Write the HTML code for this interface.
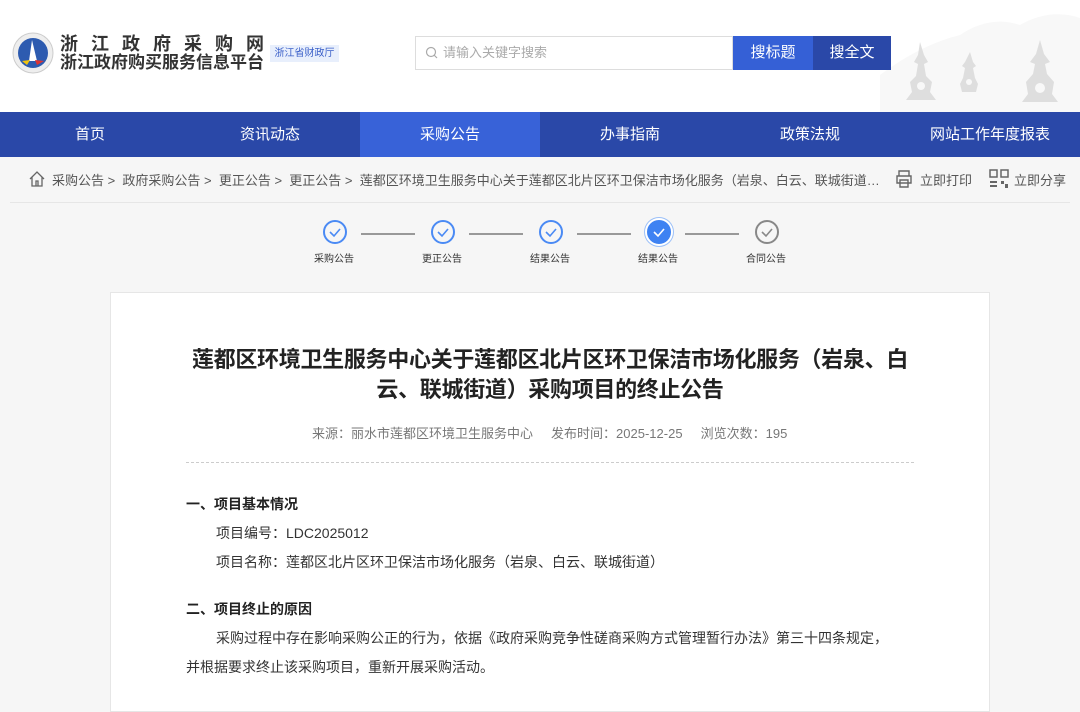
<!DOCTYPE html>
<html><head><meta charset="utf-8"><style>
*{margin:0;padding:0;box-sizing:border-box}
body{width:1080px;height:690px;overflow:hidden;background:#f6f6f6;font-family:"Liberation Sans","Noto Sans CJK SC",sans-serif;color:#333;position:relative}
.hdr{position:absolute;left:0;top:0;width:1080px;height:112px;background:#fff}
.abs{position:absolute}
.nav{position:absolute;top:112px;left:0;width:1080px;height:45px;background:#2a48a8;display:flex}
.nav div{width:180px;text-align:center;line-height:45px;color:#fff;font-size:15px}
.nav .on{background:#3862d8}
.bc{position:absolute;top:170px;left:28px;font-size:13px;color:#555;white-space:nowrap}
.step{position:absolute;top:220px;width:24px;height:24px;border:2px solid #4a8af4;border-radius:50%}
.lbl{position:absolute;top:250px;font-size:10px;color:#333;width:60px;text-align:center}
.ln{position:absolute;top:233px;height:2px;width:54px;background:#999}
.card{position:absolute;left:110px;top:292px;width:880px;height:420px;background:#fff;border:1px solid #e6e6e6}
.t{position:absolute;font-size:14px;color:#333;white-space:nowrap}
</style></head><body>
<div class="hdr">
 <svg class="abs" style="left:880px;top:0" width="200" height="112"><path d="M0 75 Q40 45 80 35 Q110 15 140 25 Q170 8 200 18 L200 112 L0 112Z" fill="#f8f8f8"/><g fill="#dedede"><path d="M40 42 L44 55 L48 62 L44 64 L46 76 L52 82 L50 92 L56 100 L26 100 L32 92 L30 82 L36 76 L38 64 L34 62 L38 55Z"/><path d="M90 52 L93 62 L96 66 L93 68 L95 78 L98 84 L96 92 L82 92 L80 84 L83 78 L85 68 L82 66 L85 62Z"/><path d="M160 40 L164 54 L170 62 L165 64 L167 74 L174 82 L172 94 L178 102 L142 102 L148 94 L146 82 L153 74 L155 64 L150 62 L156 54Z"/></g><g fill="#f8f8f8"><circle cx="41" cy="86" r="4"/><circle cx="89" cy="82" r="3"/><circle cx="160" cy="88" r="5"/></g></svg>
 <svg class="abs" style="left:12px;top:31px" width="42" height="45" viewBox="0 0 42 45"><circle cx="21" cy="22" r="20" fill="#eee" stroke="#ccc"/><circle cx="21" cy="22" r="15" fill="#2d5bb0"/><path d="M20 9 L25 30 L17 30Z" fill="#fff"/><path d="M10 30 L18 29 L15 34Z" fill="#f1c40f"/><path d="M23 29 L32 30 L25 34Z" fill="#d33"/></svg>
 <div class="abs" style="left:60px;top:33px;font-size:18px;letter-spacing:13px;color:#333;line-height:22px;font-weight:bold">浙江政府采购网</div>
 <div class="abs" style="left:60px;top:52px;font-size:17px;color:#333;line-height:22px;font-weight:bold">浙江政府购买服务信息平台</div>
 <div class="abs" style="left:270px;top:45px;width:69px;height:17px;background:#e8effc;color:#3a5fc8;font-size:10px;line-height:17px;text-align:center">浙江省财政厅</div>
 <div class="abs" style="left:415px;top:36px;width:318px;height:34px;border:1px solid #ddd;background:#fff;font-size:13px;color:#aaa;line-height:32px;padding-left:27px">请输入关键字搜索</div>
 <svg class="abs" style="left:425px;top:46px" width="13" height="13"><circle cx="6" cy="6" r="4.5" fill="none" stroke="#aaa" stroke-width="1.2"/><path d="M9 9l3 3" stroke="#aaa" stroke-width="1.2"/></svg>
 <div class="abs" style="left:733px;top:36px;width:80px;height:34px;background:#3560d6;color:#fff;font-size:15px;line-height:34px;text-align:center">搜标题</div>
 <div class="abs" style="left:813px;top:36px;width:78px;height:34px;background:#2a48a8;color:#fff;font-size:15px;line-height:34px;text-align:center">搜全文</div>
</div>
<div class="nav"><div>首页</div><div>资讯动态</div><div class="on">采购公告</div><div>办事指南</div><div>政策法规</div><div>网站工作年度报表</div></div>
<svg class="abs" style="left:28px;top:170px" width="18" height="17"><path d="M2 9 L9 2 L16 9 M4 7 V16 H14 V7 M8 16 V11 H10 V16" fill="none" stroke="#666" stroke-width="1.3"/></svg>
<div class="bc" style="left:52px;width:840px;overflow:hidden;text-overflow:ellipsis">采购公告 &gt;&nbsp; 政府采购公告 &gt;&nbsp; 更正公告 &gt;&nbsp; 更正公告 &gt;&nbsp; 莲都区环境卫生服务中心关于莲都区北片区环卫保洁市场化服务（岩泉、白云、联城街道）采购项目的终止公告</div>
<svg class="abs" style="left:894px;top:169px" width="20" height="20"><path d="M5 7V2H15V7 M3 7H17V14H3Z M6 11H14V18H6Z" fill="none" stroke="#666" stroke-width="1.4"/></svg>
<div class="bc" style="left:920px">立即打印</div>
<svg class="abs" style="left:989px;top:169px" width="20" height="20" fill="#666"><rect x="1" y="1" width="7" height="7" fill="none" stroke="#666" stroke-width="1.5"/><rect x="12" y="1" width="7" height="7" fill="none" stroke="#666" stroke-width="1.5"/><rect x="1" y="12" width="7" height="2"/><rect x="1" y="16" width="7" height="2"/><rect x="12" y="12" width="3" height="3"/><rect x="16" y="15" width="3" height="4"/></svg>
<div class="bc" style="left:1014px">立即分享</div>
<div class="abs" style="left:10px;top:202px;width:1060px;height:1px;background:#e6e6e6"></div>
<div class="step" style="left:323px"></div><div class="step" style="left:431px"></div><div class="step" style="left:539px"></div>
<div class="step" style="left:647px;background:#3e82f2;box-shadow:0 0 0 2px #fff,0 0 0 3px #9cc0f8;border-color:#3e82f2"></div>
<div class="step" style="left:755px;border-color:#888"></div>
<svg class="abs" style="left:323px;top:220px" width="460" height="24" fill="none" stroke-width="1.6"><g stroke="#4a8af4"><path d="M7 12l4 4 6-7"/><path d="M115 12l4 4 6-7"/><path d="M223 12l4 4 6-7"/></g><path d="M331 12l4 4 6-7" stroke="#fff"/><path d="M439 12l4 4 6-7" stroke="#888"/></svg>
<div class="ln" style="left:361px"></div><div class="ln" style="left:469px"></div><div class="ln" style="left:577px"></div><div class="ln" style="left:685px"></div>
<div class="lbl" style="left:304px">采购公告</div><div class="lbl" style="left:412px">更正公告</div><div class="lbl" style="left:520px">结果公告</div><div class="lbl" style="left:628px">结果公告</div><div class="lbl" style="left:736px">合同公告</div>
<div class="card"></div>
<div class="abs" style="left:150px;top:345px;width:800px;text-align:center;font-size:22px;letter-spacing:-0.3px;font-weight:bold;color:#222;line-height:30px">莲都区环境卫生服务中心关于莲都区北片区环卫保洁市场化服务（岩泉、白<br>云、联城街道）采购项目的终止公告</div>
<div class="t" style="left:312px;top:423px;color:#777;font-size:13px">来源：丽水市莲都区环境卫生服务中心&nbsp;&nbsp;&nbsp;&nbsp;&nbsp;发布时间：2025-12-25&nbsp;&nbsp;&nbsp;&nbsp;&nbsp;浏览次数：195</div>
<div class="abs" style="left:186px;top:462px;width:728px;border-top:1px dashed #ccc"></div>
<div class="t" style="left:186px;top:494px;font-weight:bold;color:#222">一、项目基本情况</div>
<div class="t" style="left:216px;top:523px">项目编号：LDC2025012</div>
<div class="t" style="left:216px;top:552px">项目名称：莲都区北片区环卫保洁市场化服务（岩泉、白云、联城街道）</div>
<div class="t" style="left:186px;top:599px;font-weight:bold;color:#222">二、项目终止的原因</div>
<div class="t" style="left:216px;top:628px">采购过程中存在影响采购公正的行为，依据《政府采购竞争性磋商采购方式管理暂行办法》第三十四条规定，</div>
<div class="t" style="left:186px;top:657px">并根据要求终止该采购项目，重新开展采购活动。</div>
</body></html>
